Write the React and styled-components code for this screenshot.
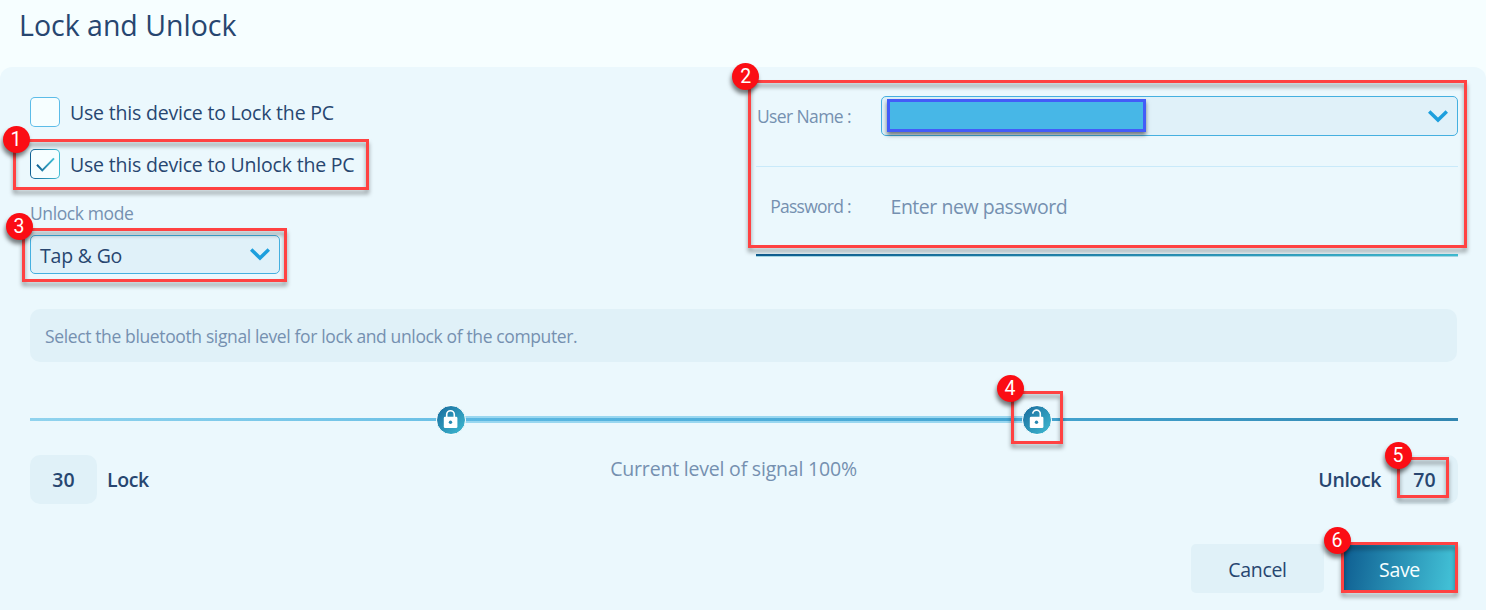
import React from "react";
import styled, { createGlobalStyle } from "styled-components";

const Global = createGlobalStyle`
  * { box-sizing: border-box; }
  body { margin: 0; background: #f6feff; overflow: hidden; }
`;

const Page = styled.div`
  position: relative;
  width: 1486px;
  height: 610px;
  display: flex;
  flex-direction: column;
  background: #f6feff;
  color: #274670;
  font-family: "Open Sans", "Noto Sans", sans-serif;
  overflow: hidden;
`;

const Text = styled.span`
  display: block;
  white-space: nowrap;
  font-size: ${(p) => p.$size || 19.5}px;
  line-height: 28px;
  font-weight: ${(p) => p.$weight || 400};
  letter-spacing: ${(p) => p.$track || 0}px;
  color: ${(p) => (p.$muted ? "#7590b0" : "inherit")};
`;

const Title = styled(Text)`
  margin: 0;
`;

const Header = styled.header`
  height: 67px;
  padding: 11px 0 0 19px;
`;

const Panel = styled.main`
  flex: 1;
  display: flex;
  flex-direction: column;
  padding: 29px 28px 17px 30px;
  background: #ebf8fd;
  border-radius: 12px 12px 0 0;
`;

const Columns = styled.div`
  display: flex;
  justify-content: space-between;
  height: 213px;
`;

const Options = styled.div`
  width: 340px;
`;

const CheckRow = styled.label`
  display: flex;
  align-items: center;
  gap: 10px;
  height: 31px;
  margin-bottom: 21px;

  ${Text} {
    padding-top: 2px;
  }
`;

const CheckBox = styled.span`
  flex: none;
  display: flex;
  width: 30px;
  height: 30px;
  border-radius: 5px;
  border: 1px solid transparent;
  background: linear-gradient(#f6feff, #f6feff) padding-box,
    ${(p) => (p.$on ? "linear-gradient(90deg, #0f5f92, #41bfd5)" : "linear-gradient(#5cbce8, #5cbce8)")} border-box;
`;

const Select = styled.div`
  display: flex;
  align-items: center;
  justify-content: space-between;
  width: ${(p) => p.$width}px;
  height: ${(p) => p.$height}px;
  padding: 0 9px 0 9px;
  border: 1px solid #45b0e0;
  border-radius: 5px;
  background: #e0f1f9;

  ${Text} {
    padding-top: 2px;
  }
`;

const ModeLabel = styled.div`
  height: 36px;
  margin-top: -1px;
`;

const Credentials = styled.div`
  width: 702px;
  height: 161px;
  display: flex;
  flex-direction: column;
`;

const Field = styled.div`
  display: flex;
  align-items: ${(p) => (p.$top ? "flex-start" : "center")};
  gap: 30px;
  height: ${(p) => p.$height}px;
  padding-top: ${(p) => p.$top || 0}px;
`;

const FieldLabel = styled.div`
  width: 95px;
  display: flex;
  justify-content: flex-end;
`;

const Rule = styled.div`
  height: 1px;
  margin-top: 30px;
  background: #c9eafa;
`;

const AccentRule = styled.div`
  height: 3px;
  margin-top: auto;
  background: linear-gradient(90deg, #0f5f92, #2a93b8 60%, #41bfd5);
  border-bottom: 1px solid #a5d5e2;
`;

const Placeholder = styled.div`
  padding: 1px 0 0 9.5px;
`;

const Info = styled.div`
  height: 53px;
  padding: 13px 0 0 15px;
  margin-right: 1px;
  border-radius: 10px;
  background: #e0f1f8;
`;

const Slider = styled.div`
  display: flex;
  align-items: center;
  height: 30px;
  margin-top: 42.5px;
`;

const Track = styled.div`
  width: ${(p) => p.$width}px;
  height: 3px;
  background: linear-gradient(90deg, ${(p) => p.$from}, ${(p) => p.$to});
  ${(p) => p.$active && "box-shadow: 0 -2px #99d7f0, 0 2px #99d7f0;"}
`;

const Thumb = styled.div`
  width: 30px;
  height: 30px;
  margin: 1px -1px 0;
  border-radius: 50%;
  border: 1.5px solid #fbffff;
  background: linear-gradient(135deg, #16679a, #41bfd5);
  background-origin: border-box;
  z-index: 1;
`;

const Levels = styled.div`
  display: flex;
  justify-content: space-between;
  height: 49px;
  margin-top: 20px;
`;

const Level = styled.div`
  display: flex;
  align-items: center;
  gap: 10px;

  ${Text} {
    padding-top: 2px;
  }
`;

const LevelValue = styled.div`
  display: flex;
  align-items: center;
  justify-content: center;
  width: 67px;
  height: 49px;
  border-radius: 10px;
  background: #e0f1f8;
`;

const Actions = styled.div`
  display: flex;
  justify-content: flex-end;
  gap: 17px;
  margin-top: auto;
`;

const Button = styled.button`
  display: flex;
  align-items: center;
  justify-content: center;
  width: ${(p) => p.$width}px;
  height: 49px;
  padding: 3px 0 0;
  border: 0;
  border-radius: 5px;
  font-family: inherit;
  color: ${(p) => (p.$primary ? "#f6feff" : "#274670")};
  background: ${(p) => (p.$primary ? "linear-gradient(100deg, #0f5f92 4%, #41bfd5 92%)" : "#e0f1f8")};
`;

const Callout = styled.div`
  position: absolute;
  z-index: 3;
  left: ${(p) => p.$x}px;
  top: ${(p) => p.$y}px;
  width: ${(p) => p.$w}px;
  height: ${(p) => p.$h}px;
  border: 3px solid #ff4242;
  filter: drop-shadow(0 4px 2px rgba(0, 0, 0, 0.38));
`;

const Badge = styled.div`
  position: absolute;
  z-index: 4;
  left: ${(p) => p.$x - 13.5}px;
  top: ${(p) => p.$y - 13.5}px;
  width: 27px;
  height: 27px;
  border-radius: 50%;
  background: #fb0d14;
  box-shadow: -1px 4px 4px rgba(0, 0, 0, 0.5);
  color: #fff;
  font: 19.5px/27px Roboto, "Liberation Sans", sans-serif;
  text-align: center;
`;

const Redaction = styled.div`
  position: absolute;
  z-index: 2;
  left: 887px;
  top: 99px;
  width: 259px;
  height: 33px;
  border: 3px solid #435cf8;
  background: #47b7e7;
  box-shadow: 0 3px 4px rgba(0, 0, 0, 0.5);
`;

const Chevron = () => (
  <svg width="20" height="13" viewBox="0 0 20 13">
    <path d="M1.2 1.6 L10 10 L18.8 1.6" fill="none" stroke="#1d9fdd" strokeWidth="3.5" />
  </svg>
);

const Check = () => (
  <svg width="28" height="28" viewBox="0 0 28 28">
    <defs>
      <linearGradient id="check" x1="0" x2="1">
        <stop offset="0" stopColor="#0f5f92" />
        <stop offset="1" stopColor="#41bfd5" />
      </linearGradient>
    </defs>
    <path d="M6 14.8 L11.3 20.4 L23 8.4" fill="none" stroke="url(#check)" strokeWidth="2" />
  </svg>
);

const LockSvg = styled.svg`
  display: block;
`;

const LockIcon = ({ open }) => (
  <LockSvg width="27" height="27" viewBox="0 0 27 27">
    <rect x="6.8" y="10.8" width="13.6" height="11.2" rx="1.3" fill="#fff" />
    <path
      d={open ? "M9.7 7.6 A3.8 3.8 0 0 1 17.3 8.2 V11" : "M9.7 11 V8.6 A3.8 3.8 0 0 1 17.3 8.6 V11"}
      fill="none"
      stroke="#fff"
      strokeWidth="1.6"
    />
    <circle cx="13.5" cy="16.2" r="1.7" fill="#2587b0" />
  </LockSvg>
);

const callouts = [
  { n: 1, x: 13, y: 139, w: 356, h: 51, bx: 16, by: 139 },
  { n: 2, x: 748, y: 80, w: 719, h: 168, bx: 745.8, by: 76.8 },
  { n: 3, x: 22, y: 228, w: 265, h: 54, bx: 19, by: 226 },
  { n: 4, x: 1011, y: 391, w: 52, h: 53, bx: 1010, by: 388.7 },
  { n: 5, x: 1397, y: 457, w: 52, h: 41, bx: 1398, by: 455.8 },
  { n: 6, x: 1341, y: 542, w: 117, h: 51, bx: 1337, by: 540 },
];

export default function App() {
  return (
    <Page>
      <Global />
      <Header>
        <Title as="h1" $size={28.5}>Lock and Unlock</Title>
      </Header>
      <Panel>
        <Columns>
          <Options>
            <CheckRow>
              <CheckBox />
              <Text $track={-0.2}>Use this device to Lock the PC</Text>
            </CheckRow>
            <CheckRow>
              <CheckBox $on><Check /></CheckBox>
              <Text $track={-0.2}>Use this device to Unlock the PC</Text>
            </CheckRow>
            <ModeLabel>
              <Text $size={17.5} $track={-0.4} $muted>Unlock mode</Text>
            </ModeLabel>
            <Select $width={250} $height={39}>
              <Text $track={-0.2}>Tap &amp; Go</Text>
              <Chevron />
            </Select>
          </Options>
          <Credentials>
            <Field $height={40}>
              <FieldLabel><Text $size={17.5} $track={-0.6} $muted>User Name :</Text></FieldLabel>
              <Select $width={577} $height={40}>
                <span />
                <Chevron />
              </Select>
            </Field>
            <Rule />
            <Field $height={80} $top={25}>
              <FieldLabel><Text $size={17.5} $track={-0.72} $muted>Password :</Text></FieldLabel>
              <Placeholder><Text $track={-0.46} $muted>Enter new password</Text></Placeholder>
            </Field>
            <AccentRule />
          </Credentials>
        </Columns>
        <Info>
          <Text $size={17.5} $track={-0.37} $muted>Select the bluetooth signal level for lock and unlock of the computer.</Text>
        </Info>
        <Slider>
          <Track $width={407} $from="#90d3ee" $to="#6cc1e6" />
          <Thumb><LockIcon /></Thumb>
          <Track $width={558} $active $from="#5cb9e3" $to="#44a5d2" />
          <Thumb><LockIcon open /></Thumb>
          <Track $width={407} $from="#43a3cf" $to="#3186b0" />
        </Slider>
        <Levels>
          <Level>
            <LevelValue><Text $weight={600}>30</Text></LevelValue>
            <Text $weight={600} $track={-0.4}>Lock</Text>
          </Level>
          <Text $track={-0.2} $muted>Current level of signal 100%</Text>
          <Level>
            <Text $weight={600} $track={-0.4}>Unlock</Text>
            <LevelValue><Text $weight={600}>70</Text></LevelValue>
          </Level>
        </Levels>
        <Actions>
          <Button $width={133}><Text $track={-0.3}>Cancel</Text></Button>
          <Button $width={117} $primary><Text $track={-0.3}>Save</Text></Button>
        </Actions>
      </Panel>
      <Redaction />
      {callouts.map((c) => (
        <React.Fragment key={c.n}>
          <Callout $x={c.x} $y={c.y} $w={c.w} $h={c.h} />
          <Badge $x={c.bx} $y={c.by}>{c.n}</Badge>
        </React.Fragment>
      ))}
    </Page>
  );
}
